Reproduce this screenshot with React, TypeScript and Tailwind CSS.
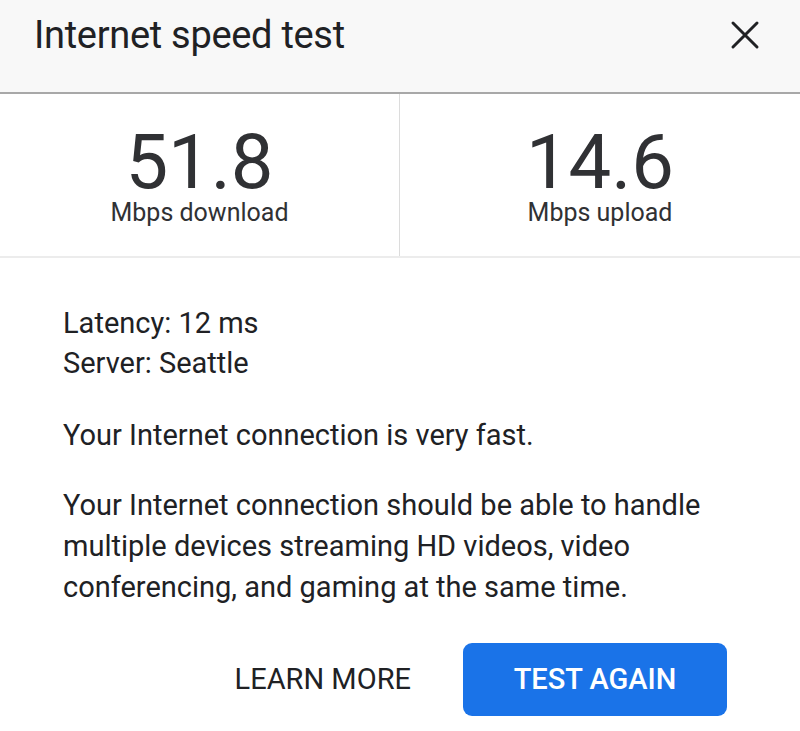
export default function App() {
  return (
    <div className="w-[800px] h-[731px] bg-white text-[#202124] overflow-hidden" style={{ fontFamily: "Roboto, 'Liberation Sans', sans-serif" }}>
      <div className="h-[94px] bg-[#f8f8f8] border-b-2 border-[#a8a8a8] flex items-center justify-between pl-[34px] pr-[40px]">
        <div className="text-[38px] leading-none pb-[22px] tracking-[-0.3px]">Internet speed test</div>
        <svg width="30" height="30" viewBox="0 0 30 30" className="mb-[22px]">
          <path d="M3 3 L27 27 M27 3 L3 27" stroke="#202124" strokeWidth="3" strokeLinecap="round" />
        </svg>
      </div>
      <div className="grid grid-cols-2 h-[164px] border-b-2 border-[#ececec]">
        <div className="border-r border-[#dcdcdc] flex flex-col items-center pt-[33px]">
          <div className="text-[76px] leading-[70px] text-[#303134]">51.8</div>
          <div className="text-[25px] leading-[30px] text-[#303134] mt-[1px]">Mbps download</div>
        </div>
        <div className="flex flex-col items-center pt-[33px]">
          <div className="text-[76px] leading-[70px] text-[#303134]">14.6</div>
          <div className="text-[25px] leading-[30px] text-[#303134] mt-[1px]">Mbps upload</div>
        </div>
      </div>
      <div className="pl-[63px] pr-[20px] pt-[45px] text-[29px] text-[#202124]">
        <div className="leading-[40px]">Latency: 12 ms</div>
        <div className="leading-[40px]">Server: Seattle</div>
        <div className="leading-[40px] mt-[32px]">Your Internet connection is very fast.</div>
        <div className="leading-[41px] mt-[30px]">
          Your Internet connection should be able to handle<br />multiple devices streaming HD videos, video<br />conferencing, and gaming at the same time.
        </div>
      </div>
      <div className="flex items-center justify-end pr-[73px] mt-[35px] gap-[52px]">
        <button className="text-[29px] text-[#202124]">LEARN MORE</button>
        <button className="w-[264px] h-[73px] rounded-[9px] bg-[#1a73e8] text-white text-[29px] font-medium">TEST AGAIN</button>
      </div>
    </div>
  );
}
